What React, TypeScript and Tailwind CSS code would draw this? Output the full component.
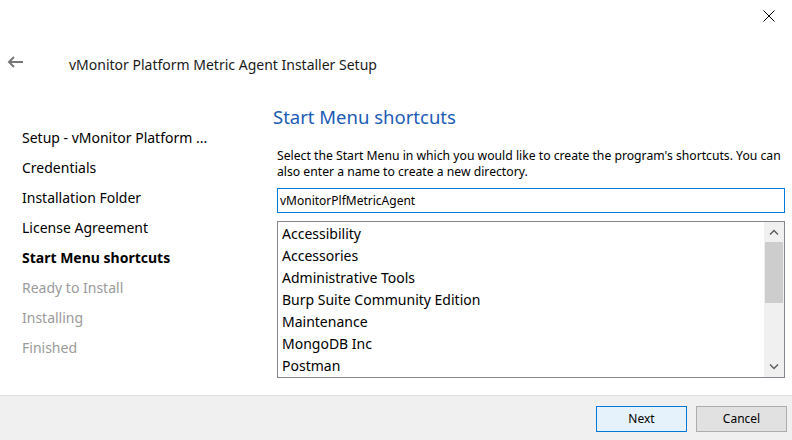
import React from "react";

const steps = [
  { label: "Setup - vMonitor Platform ...", state: "done" },
  { label: "Credentials", state: "done" },
  { label: "Installation Folder", state: "done" },
  { label: "License Agreement", state: "done" },
  { label: "Start Menu shortcuts", state: "current" },
  { label: "Ready to Install", state: "todo" },
  { label: "Installing", state: "todo" },
  { label: "Finished", state: "todo" },
];

const folders = [
  "Accessibility",
  "Accessories",
  "Administrative Tools",
  "Burp Suite Community Edition",
  "Maintenance",
  "MongoDB Inc",
  "Postman",
];

export default function App() {
  return (
    <div
      className="flex h-[440px] w-[792px] flex-col overflow-hidden bg-white text-black"
      style={{ fontFamily: '"Noto Sans", "Open Sans", sans-serif' }}
    >
      {/* window chrome */}
      <div className="flex h-[32px] justify-end">
        <button className="flex h-[32px] w-[46px] items-center justify-center">
          <svg width="12" height="12" viewBox="0 0 12 12" fill="none" stroke="#000" strokeWidth="1">
            <path d="M0.5 0.5 L11.5 11.5 M11.5 0.5 L0.5 11.5" />
          </svg>
        </button>
      </div>

      <div className="flex h-[64px] items-start pt-[23px]">
        <div className="flex w-[69px] pl-[7px] pt-[1px]">
          <svg width="16" height="12" viewBox="0 0 16 12" fill="none" stroke="#777" strokeWidth="2">
            <path d="M16 6 H2 M7 1 L2 6 L7 11" />
          </svg>
        </div>
        <div className="text-[14px] leading-[20px] text-[#1a1a1a]">
          vMonitor Platform Metric Agent Installer Setup
        </div>
      </div>

      <div className="flex flex-1">
        <div className="w-[273px] pl-[22px] pt-[30px]">
          {steps.map((s) => (
            <div
              key={s.label}
              className={
                "h-[30px] text-[14px] leading-[24px] " +
                (s.state === "current"
                  ? "font-bold text-black"
                  : s.state === "todo"
                    ? "text-[#9a9a9a]"
                    : "text-black")
              }
            >
              {s.label}
            </div>
          ))}
        </div>

        <div className="flex w-[512px] flex-col pt-[8px]">
          <div className="text-[18.5px] leading-[26px] text-[#1c5bb4]">Start Menu shortcuts</div>
          <div className="mt-[18px] w-[516px] pl-[4px] text-[12.2px] leading-[16px] text-black">
            Select the Start Menu in which you would like to create the program's shortcuts. You can also enter a name
            to create a new directory.
          </div>
          <div className="mt-[8px] ml-[4px] flex h-[25px] items-center border border-[#0078d7] px-[2px] text-[12px]">
            vMonitorPlfMetricAgent
          </div>
          <div className="mt-[8px] ml-[4px] flex h-[157px] border border-[#828790]">
            <div className="flex-1 pl-[4px] pt-[1px]">
              {folders.map((f) => (
                <div key={f} className="h-[22px] text-[14px] leading-[22px]">
                  {f}
                </div>
              ))}
            </div>
            <div className="flex w-[20px] flex-col bg-[#f0f0f0]">
              <div className="flex h-[20px] items-center justify-center">
                <svg width="10" height="6" viewBox="0 0 10 6" fill="none" stroke="#606060" strokeWidth="1.5">
                  <path d="M1 5.5 L5 1.5 L9 5.5" />
                </svg>
              </div>
              <div className="mx-[1px] h-[61px] bg-[#cdcdcd]" />
              <div className="flex-1" />
              <div className="flex h-[20px] items-center justify-center">
                <svg width="10" height="6" viewBox="0 0 10 6" fill="none" stroke="#606060" strokeWidth="1.5">
                  <path d="M1 0.5 L5 4.5 L9 0.5" />
                </svg>
              </div>
            </div>
          </div>
        </div>
      </div>

      <div className="flex h-[45px] items-start justify-end gap-[9px] border-t border-[#dfdfdf] bg-[#f0f0f0] pr-[5px] pt-[10px]">
        <button className="h-[26px] w-[91px] border border-[#0078d7] bg-[#e5f1fb] text-[12px]">Next</button>
        <button className="h-[26px] w-[91px] border border-[#adadad] bg-[#e1e1e1] text-[12px]">Cancel</button>
      </div>
    </div>
  );
}
